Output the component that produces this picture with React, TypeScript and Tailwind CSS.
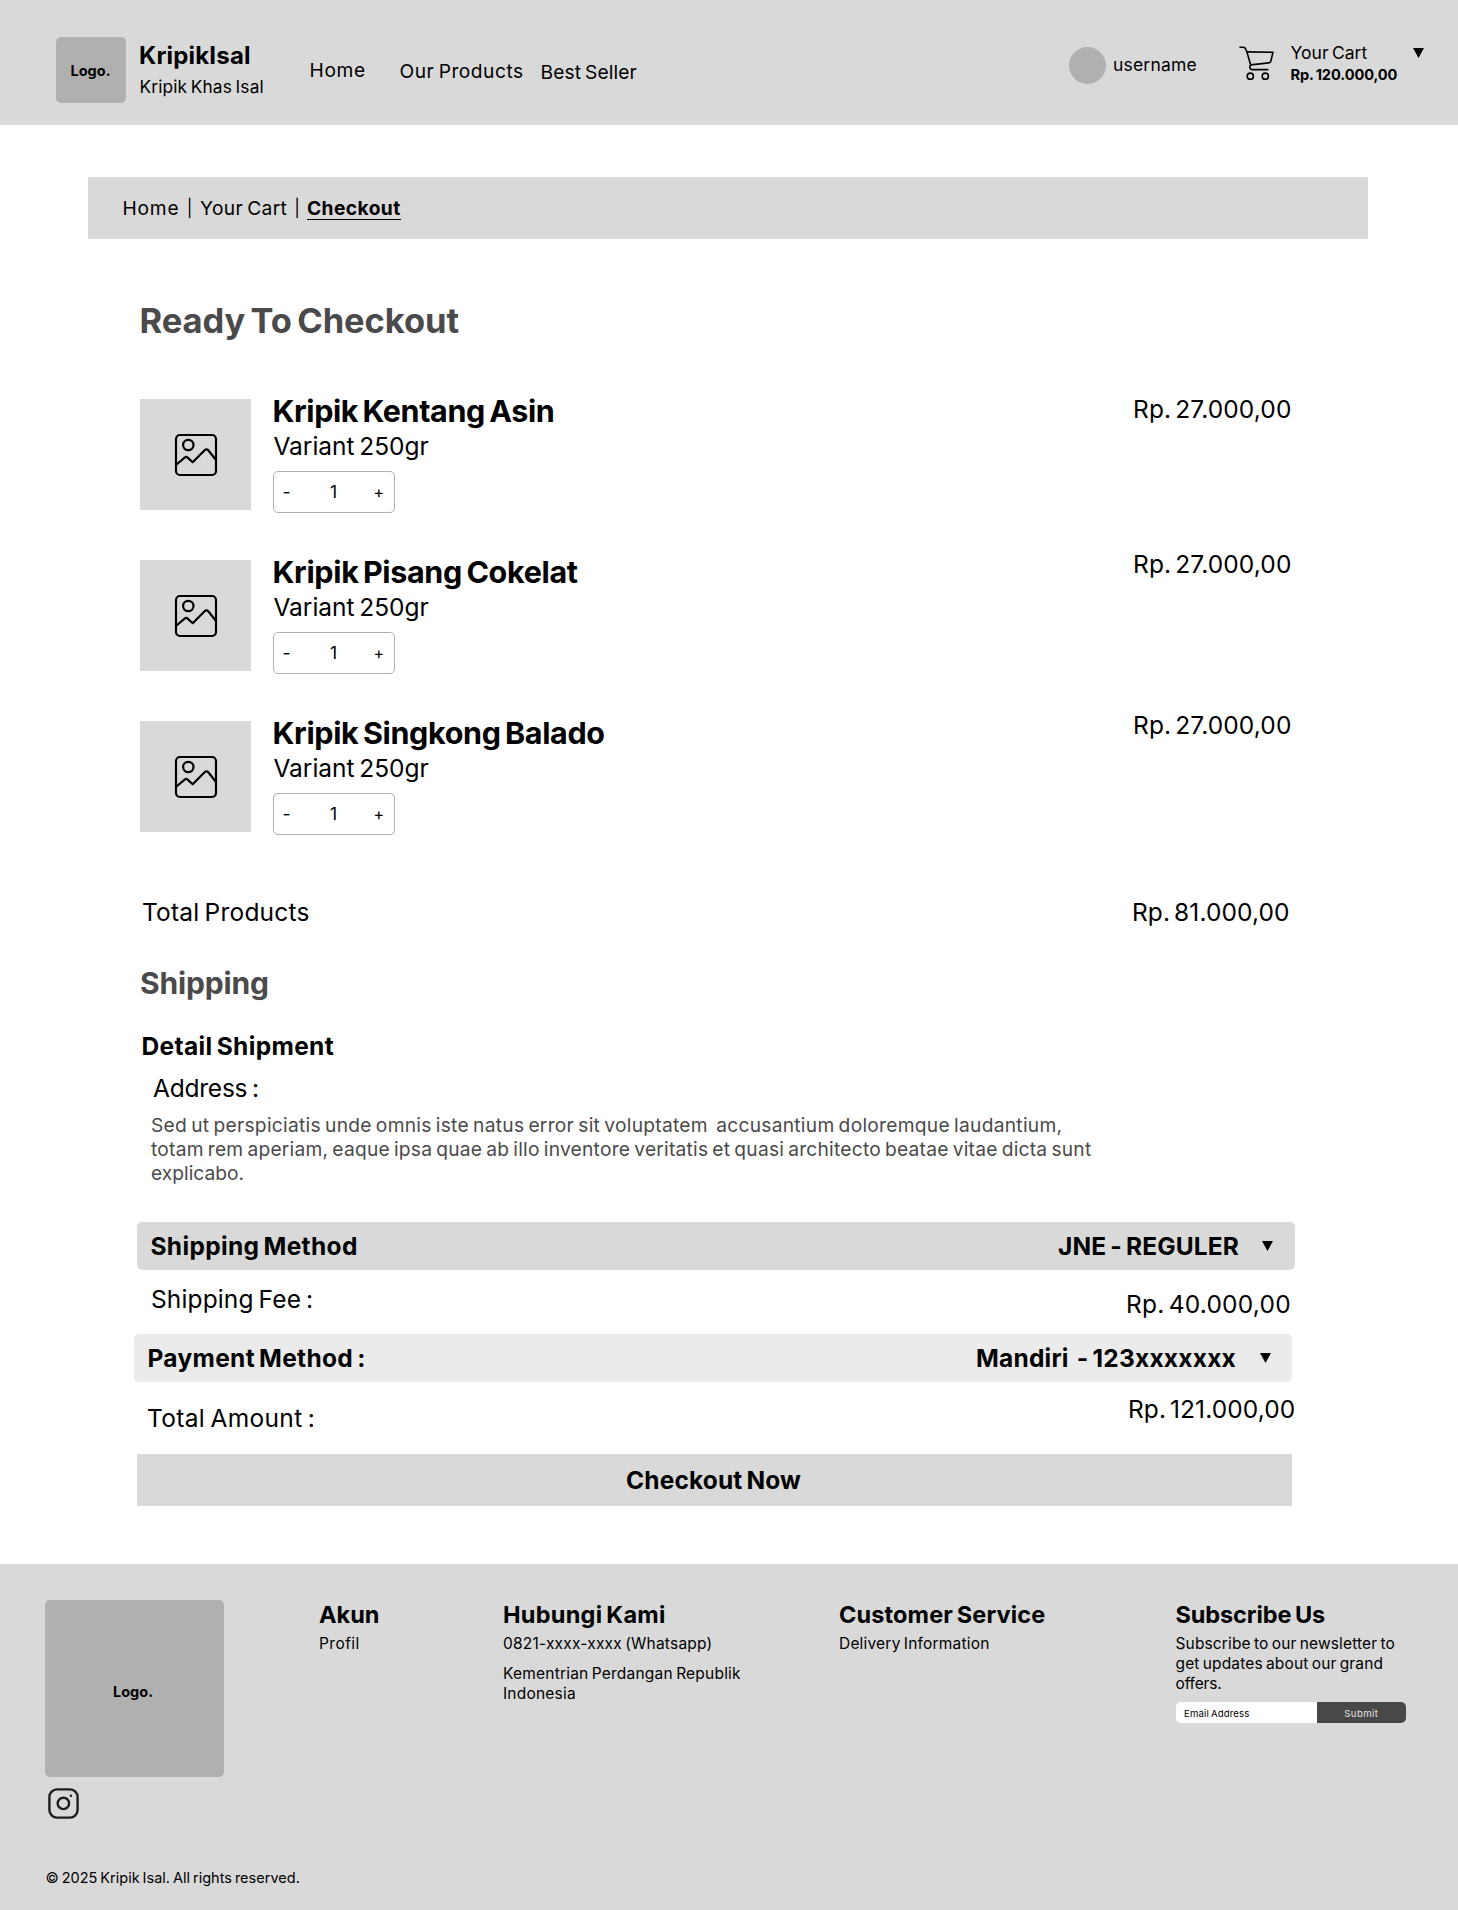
const CartIcon = () => (
  <svg width="36" height="36" viewBox="0 0 36 36" fill="none" stroke="#000" strokeWidth="1.6" strokeLinecap="round" strokeLinejoin="round">
    <path d="M1 1.2H4.3C5.8 1.2 6.6 2.4 7 3.8L7.9 6L11.7 19" />
    <path d="M7.9 5.9L34 6.3L31.8 15.2C31.5 16.3 30.9 16.8 29.8 16.9L11.7 18.9C10.4 20.2 10.4 23.6 13 23.6H28.8" />
    <circle cx="11.3" cy="30.2" r="3.1" />
    <circle cx="26.3" cy="30.2" r="3.1" />
  </svg>
);

const ImageIcon = () => (
  <svg width="44" height="44" viewBox="0 0 44 44" fill="none" stroke="#000" strokeWidth="2.2" strokeLinecap="round" strokeLinejoin="round">
    <rect x="2" y="2" width="40" height="40" rx="4" />
    <circle cx="14.3" cy="12" r="5.2" />
    <path d="M2.5 31.5L10.6 24.6C11.6 23.8 12.7 23.8 13.6 24.6L18.7 29.2L30.6 17.2C31.8 16 33.2 16 34.3 17.3L42 27" />
  </svg>
);

const InstagramIcon = () => (
  <svg width="31" height="31" viewBox="0 0 31 31" fill="none" stroke="#1e1e1e" strokeWidth="2.4">
    <rect x="1.4" y="1.4" width="28.2" height="28.2" rx="7.6" />
    <circle cx="15.4" cy="15.4" r="5.7" />
    <circle cx="22.9" cy="7.8" r="1.2" fill="#1e1e1e" stroke="none" />
  </svg>
);

const Caret = () => (
  <svg width="11" height="10" viewBox="0 0 11 10">
    <path d="M0 0H11L5.5 10Z" fill="#000" />
  </svg>
);

const items = [
  { name: "Kripik Kentang Asin", nameStyle: "tracking-[-0.0132em]", priceStyle: "-mt-[5px]" },
  { name: "Kripik Pisang Cokelat", nameStyle: "tracking-[-0.0112em]", priceStyle: "-mt-[11px]" },
  { name: "Kripik Singkong Balado", nameStyle: "tracking-[-0.0114em]", priceStyle: "-mt-[11px]" },
];

function Header() {
  return (
    <header className="flex h-[125px] items-start bg-[#d9d9d9]">
      <div className="mt-[37px] ml-[55.5px] flex h-[66px] w-[70px] items-center justify-center rounded-[5px] bg-[#b0b0b0] pt-[2px] text-[14.5px] font-bold">
        Logo.
      </div>
      <div className="mt-[41px] ml-[13.5px] w-[170.5px]">
        <div className="text-[24px] leading-[30px] font-bold tracking-[0.0075em]">KripikIsal</div>
        <div className="mt-[5px] ml-[0.5px] text-[17.3px] leading-[22px] tracking-[0.008em]">Kripik Khas Isal</div>
      </div>
      <nav className="flex items-start text-[19.2px] leading-[24px]">
        <a className="mt-[58px] w-[90px] tracking-[0.035em]">Home</a>
        <a className="mt-[59px] w-[141px] tracking-[0.0265em]">Our Products</a>
        <a className="mt-[60px] tracking-[0.0053em]">Best Seller</a>
      </nav>
      <div className="ml-auto flex w-[389px] items-start">
        <div className="mt-[47px] size-[37px] rounded-full bg-[#b0b0b0]" />
        <div className="mt-[54px] ml-[7px] w-[125.5px] text-[17.5px] leading-[22px] tracking-[0.011em]">username</div>
        <div className="mt-[46px] w-[52px]">
          <CartIcon />
        </div>
        <div className="mt-[42px] w-[122.5px]">
          <div className="text-[17.5px] leading-[22px]">Your Cart</div>
          <div className="mt-px text-[14.6px] leading-[20px] font-bold tracking-[-0.006em]">Rp. 120.000,00</div>
        </div>
        <div className="mt-[48px]">
          <Caret />
        </div>
      </div>
    </header>
  );
}

function Footer() {
  return (
    <footer className="mt-[58px] flex h-[346px] bg-[#d9d9d9] pt-[36px] pl-[44.5px]">
      <div className="w-[274.5px]">
        <div className="flex h-[177px] w-[179px] items-center justify-center rounded-[5px] bg-[#b0b0b0] pt-[7px] pr-[2px] text-[14.5px] font-bold">
          Logo.
        </div>
        <div className="mt-[11px] ml-[3.5px]">
          <InstagramIcon />
        </div>
        <div className="mt-[48.5px] ml-px text-[14.5px] leading-[20px] whitespace-nowrap tracking-[0.0008em]">© 2025 Kripik Isal. All rights reserved.</div>
      </div>
      <div className="w-[184px]">
        <h3 className="text-[23.5px] leading-[30px] font-bold">Akun</h3>
        <p className="mt-[4px] text-[15.5px] leading-[20px] tracking-[0.03em]">Profil</p>
      </div>
      <div className="w-[336px]">
        <h3 className="text-[23.5px] leading-[30px] font-bold tracking-[0.0113em]">Hubungi Kami</h3>
        <p className="mt-[4px] text-[15.5px] leading-[20px] tracking-[0.0133em]">0821-xxxx-xxxx (Whatsapp)</p>
        <p className="mt-[10px] text-[15.5px] leading-[20px] tracking-[0.0135em]">
          Kementrian Perdangan Republik
          <br />
          Indonesia
        </p>
      </div>
      <div className="w-[336.5px]">
        <h3 className="text-[23.5px] leading-[30px] font-bold tracking-[0.0053em]">Customer Service</h3>
        <p className="mt-[4px] text-[15.5px] leading-[20px] tracking-[0.0127em]">Delivery Information</p>
      </div>
      <div className="w-[230px]">
        <h3 className="text-[23.5px] leading-[30px] font-bold tracking-[-0.0043em]">Subscribe Us</h3>
        <p className="mt-[4px] text-[15.5px] leading-[20px] tracking-[0.009em]">
          Subscribe to our newsletter to
          <br />
          get updates about our grand
          <br />
          <span className="tracking-[-0.01em]">offers.</span>
        </p>
        <div className="mt-[8px] flex h-[21px] overflow-hidden rounded-[5px] text-[9.6px] leading-[21px]">
          <div className="w-[141.5px] bg-white pt-px pl-[8.5px] tracking-[0.014em]">Email Address</div>
          <div className="flex-1 bg-[#484848] pt-px text-center tracking-[0.041em] text-[#e6e6e6]">Submit</div>
        </div>
      </div>
    </footer>
  );
}

export default function App() {
  return (
    <div className="w-[1458px] bg-white font-['Inter','Liberation_Sans',sans-serif] text-black **:[word-spacing:-0.08em]">
      <Header />

      <div className="mt-[52px] ml-[88px] flex h-[62px] w-[1280px] bg-[#d9d9d9] pt-[19px] pl-[34.5px] text-[19.2px] leading-[24px]">
        <span className="w-[61.5px] tracking-[0.04em]">Home</span>
        <span className="w-[11px] text-center text-[17px]">|</span>
        <span className="ml-[5px] w-[91.5px] tracking-[0.0176em]">Your Cart</span>
        <span className="w-[11px] text-center text-[17px]">|</span>
        <span className="ml-[4.5px] h-[24px] border-b border-black font-bold tracking-[0.022em]">Checkout</span>
      </div>

      <main className="ml-[134px] w-[1161px] text-[24.5px] leading-[30px]">
        <h1 className="mt-[61px] ml-[5.5px] text-[34.5px] leading-[42px] font-bold tracking-[-0.0019em] text-[#4a4a4a]">Ready To Checkout</h1>

        <div className="mt-[57px] flex flex-col gap-[50px] pl-[6px]">
          {items.map((item) => (
            <div key={item.name} className="flex h-[111px] items-start">
              <div className="flex size-[111px] items-center justify-center bg-[#d9d9d9]">
                <ImageIcon />
              </div>
              <div className="-mt-[6px] ml-[21.5px]">
                <h2 className={`text-[30.5px] leading-[36px] font-bold whitespace-nowrap ${item.nameStyle}`}>{item.name}</h2>
                <div className="mt-[2px] ml-px tracking-[-0.0015em]">Variant 250gr</div>
                <div className="mt-[10px] ml-[0.5px] flex h-[42px] w-[122px] items-center justify-between rounded-[5px] border border-[#b0b0b0] pr-[10px] pl-[8.5px] text-[17.5px]">
                  <span>-</span>
                  <span className="ml-[3px]">1</span>
                  <span className="text-[16px]">+</span>
                </div>
              </div>
              <div className={`ml-auto w-[162px] tracking-[0.0045em] [word-spacing:-0.12em]! ${item.priceStyle}`}>Rp. 27.000,00</div>
            </div>
          ))}
        </div>

        <div className="mt-[65px] flex justify-between pl-[8px]">
          <span className="tracking-[0.0086em]">Total Products</span>
          <span className="w-[163px] tracking-[0.0035em] [word-spacing:-0.12em]!">Rp. 81.000,00</span>
        </div>

        <h2 className="mt-[38px] ml-[6px] text-[30px] leading-[36px] font-bold tracking-[-0.0051em] text-[#4a4a4a]">Shipping</h2>
        <h3 className="mt-[30px] ml-[7.5px] font-bold tracking-[0.0142em]">Detail Shipment</h3>
        <div className="mt-[12px] ml-[19px] tracking-[-0.0092em]">Address :</div>
        <p className="mt-[10px] ml-[17px] text-[19.2px] leading-[24px] whitespace-nowrap text-[#4a4a4a]">
          <span className="tracking-[0.0142em]">Sed ut perspiciatis unde omnis iste natus error sit voluptatem&nbsp; accusantium doloremque laudantium,</span>
          <br />
          <span className="tracking-[0.0118em]">totam rem aperiam, eaque ipsa quae ab illo inventore veritatis et quasi architecto beatae vitae dicta sunt</span>
          <br />
          <span>explicabo.</span>
        </p>

        <div className="mt-[37px] ml-[3px] flex h-[48px] items-center rounded-[5px] bg-[#d9d9d9] pr-[22px] pl-[13.5px] font-bold">
          <span className="tracking-[0.0135em]">Shipping Method</span>
          <span className="mr-[23px] ml-auto tracking-[0.0055em]">JNE - REGULER</span>
          <Caret />
        </div>
        <div className="flex h-[64px] items-start justify-between pl-[17px]">
          <span className="mt-[14px] tracking-[0.005em]">Shipping Fee :</span>
          <span className="mt-[19px] w-[169px] tracking-[0.009em] [word-spacing:-0.12em]!">Rp. 40.000,00</span>
        </div>
        <div className="mr-[3px] flex h-[48px] items-center rounded-[5px] bg-[#ebebeb] pr-[21.5px] pl-[13.5px] font-bold">
          <span className="tracking-[0.0125em]">Payment Method :</span>
          <span className="mr-[23.5px] ml-auto tracking-[0.0089em]">Mandiri&nbsp; - 123xxxxxxx</span>
          <Caret />
        </div>
        <div className="flex h-[72px] items-start justify-between pl-[13px]">
          <span className="mt-[21px] tracking-[0.014em]">Total Amount :</span>
          <span className="mt-[12px] w-[167px] whitespace-nowrap tracking-[0.003em] [word-spacing:-0.12em]!">Rp. 121.000,00</span>
        </div>
        <button className="mr-[3px] ml-[3px] block h-[52px] w-[1155px] bg-[#d9d9d9] pr-[2px] pb-px font-bold tracking-[0.0056em]">Checkout Now</button>
      </main>

      <Footer />
    </div>
  );
}
